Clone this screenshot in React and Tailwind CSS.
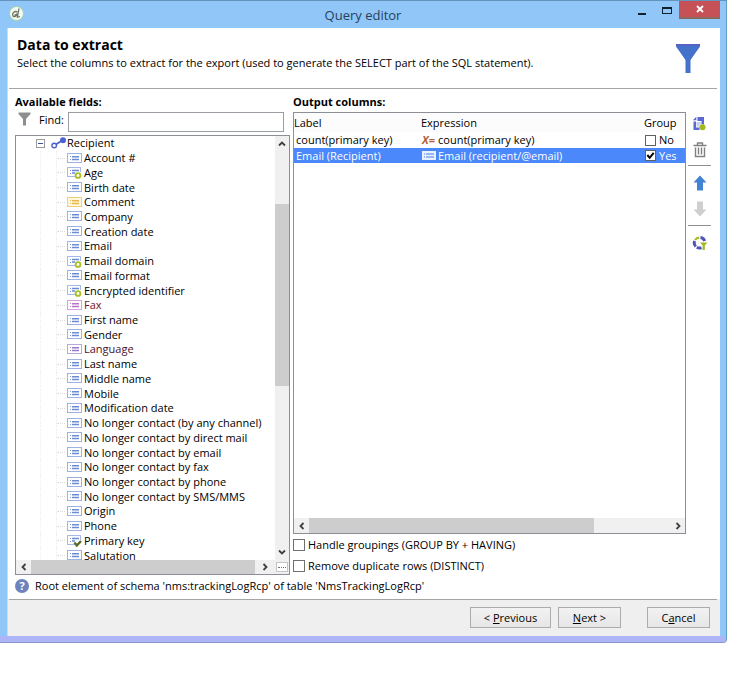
import React from "react";

const fields = [
  ["Account #"],
  ["Age", "calc"],
  ["Birth date"],
  ["Comment", "memo"],
  ["Company"],
  ["Creation date"],
  ["Email"],
  ["Email domain", "calc"],
  ["Email format"],
  ["Encrypted identifier", "calc"],
  ["Fax", "fax"],
  ["First name"],
  ["Gender"],
  ["Language", "language"],
  ["Last name"],
  ["Middle name"],
  ["Mobile"],
  ["Modification date"],
  ["No longer contact (by any channel)"],
  ["No longer contact by direct mail"],
  ["No longer contact by email"],
  ["No longer contact by fax"],
  ["No longer contact by phone"],
  ["No longer contact by SMS/MMS"],
  ["Origin"],
  ["Phone"],
  ["Primary key", "key"],
  ["Salutation"],
];

const strokes = { memo: "#e3b13c", fax: "#b55fc4", language: "#8f6cc4" };
const labelColors = { fax: "text-[#6e1226]", language: "text-[#4a1030]" };

function FieldIcon({ kind }) {
  const color = strokes[kind] || "#5b7fd0";
  const cut = kind === "calc" || kind === "key";
  return (
    <svg width="16" height="13" viewBox="0 0 16 13" className="shrink-0" aria-hidden="true">
      {cut ? (
        <path d="M8 10.5H.5v-9h13V6" fill="none" stroke={color} strokeOpacity="0.55" />
      ) : (
        <rect x="0.5" y="1.5" width="14" height="9" fill={kind === "memo" ? "#fff6dc" : "#fff"} stroke={color} strokeOpacity="0.6" />
      )}
      <path d={cut ? "M3 4.5h1M3 7.5h1" : "M3 4.5h1M3 7.5h1"} stroke={color} strokeOpacity="0.8" fill="none" />
      <path d={cut ? "M5 4.5h7M5 7h3" : "M5 4.8h7M5 7.5h7"} stroke={color} strokeWidth="1.5" strokeOpacity="0.9" fill="none" />
      {kind === "calc" && <circle cx="11" cy="9.5" r="2.4" fill="#fff" stroke="#a9bf22" strokeWidth="1.9" />}
      {kind === "key" && <path d="M7.5 8.5l2.3 3L14 7" fill="none" stroke="#5b6b2e" strokeWidth="2.4" />}
    </svg>
  );
}

function Chevron({ d, label, className }) {
  return (
    <button type="button" aria-label={label} className={"flex shrink-0 items-center justify-center bg-[#f0f0f0] " + className}>
      <svg width="8" height="8" viewBox="0 0 8 8" fill="none" stroke="#404040" strokeWidth="1.8">
        <path d={d} />
      </svg>
    </button>
  );
}

const LEFT = "M5.5 1L2.5 4l3 3";
const RIGHT = "M2.5 1l3 3-3 3";
const UP = "M1 5.5l3-3 3 3";
const DOWN = "M1 2.5l3 3 3-3";

function Header() {
  return (
    <header className="mr-[3px] ml-px flex h-[61px] items-start justify-between border-b border-[#a5a5a5] pr-4 pl-2">
      <div className="pt-[7px]">
        <h1 className="text-[14px] leading-5 font-bold">Data to extract</h1>
        <p className="leading-4">Select the columns to extract for the export (used to generate the SELECT part of the SQL statement).</p>
      </div>
      <svg width="26" height="31" viewBox="0 0 26 31" className="mt-[15px]" aria-hidden="true">
        <path d="M1 1.5h24v2L15.500 17v13h-5V17L1 3.5z" fill="#4472ca" />
        <path d="M1 1.8h24" stroke="#5a5fc0" strokeWidth="1.6" />
      </svg>
    </header>
  );
}

function FieldTree() {
  return (
    <div className="mt-[3px] border border-[#8c8f96]">
      <div className="flex h-[424px]">
        <div className="min-w-0 flex-1 overflow-hidden">
          <ul className="grid h-[427px] auto-rows-fr">
            <li className="flex min-h-0 items-center pl-5">
              <button type="button" aria-label="Collapse Recipient" className="flex size-[9px] items-center justify-center border border-[#9a9a9a]">
                <span className="h-px w-[5px] bg-[#3b4f9a]" />
              </button>
              <svg width="16" height="12" viewBox="0 0 16 12" className="ml-[6px]" aria-hidden="true">
                <path d="M4 8l8-5" stroke="#4a63d0" strokeWidth="1.8" />
                <circle cx="3.2" cy="8.5" r="2.3" fill="#fff" stroke="#4a63d0" strokeWidth="1.4" />
                <circle cx="12" cy="3.3" r="3" fill="#4a63d0" />
              </svg>
              <span>Recipient</span>
            </li>
            {fields.map(([name, kind]) => (
              <li key={name} className="flex min-h-0 items-stretch pl-6">
                <span className="w-4 border-l border-dotted border-[#eeeeee]" />
                <span className="flex w-[11px] items-center border-l border-dotted border-[#ececec]">
                  <span className="w-2 border-t border-dotted border-[#dcdcdc]" />
                </span>
                <span className={"flex items-center whitespace-nowrap " + (labelColors[kind] || "")}>
                  <FieldIcon kind={kind} />
                  <span className="pl-px">{name}</span>
                </span>
              </li>
            ))}
          </ul>
        </div>
        <div className="flex w-[14px] flex-col bg-[#f0f0f0]">
          <Chevron d={UP} label="Scroll up" className="h-4" />
          <div className="mt-[52px] h-[182px] bg-[#cdcdcd]" />
          <Chevron d={DOWN} label="Scroll down" className="mt-auto h-4" />
        </div>
      </div>
      <div className="flex h-[14px] bg-[#f0f0f0]">
        <Chevron d={LEFT} label="Scroll left" className="w-[15px]" />
        <div className="flex-1 bg-[#cdcdcd]" />
        <Chevron d={RIGHT} label="Scroll right" className="w-5" />
        <button type="button" aria-label="More" className="mx-px my-[2px] flex w-3 items-center justify-center border border-[#c4c4c4] bg-white">
          <span className="w-2 border-t border-dotted border-[#707070]" />
        </button>
      </div>
    </div>
  );
}

function ToolButton({ label, children }) {
  return (
    <button type="button" aria-label={label} className="flex h-[26px] items-center justify-center">
      <svg width="16" height="16" viewBox="0 0 16 16">{children}</svg>
    </button>
  );
}

function Toolbar() {
  return (
    <div className="ml-[2px] flex w-[23px] shrink-0 flex-col pt-4">
      <ToolButton label="Add column">
        <path d="M5.500 1H12v7.500H9.500V5H5.500z" fill="#5a68d4" />
        <path d="M.8 4.200L4.300.8v3.400z" fill="#5a68d4" />
        <path d="M1.500 5.500H4v6h3.500V14h-6z" fill="#5a68d4" />
        <path d="M4.500 6h4.500v2.200H7.500v2.300h-3z" fill="#c9cdf0" />
        <circle cx="10.500" cy="11.300" r="3" fill="#a0b824" />
      </ToolButton>
      <ToolButton label="Delete column">
        <path d="M1.500 3.500h13M5.500 3V1h5v2M3.500 5.500v9h9v-9M6.500 5.500v7M9.500 5.500v7" fill="none" stroke="#808080" strokeWidth="1.400" />
      </ToolButton>
      <div className="mt-[2px] mb-px h-px bg-[#909090]" />
      <div className="flex flex-col py-[3px]">
        <ToolButton label="Move up">
          <path d="M8 .5L14.500 7.500H11V15.500H5V7.500H1.500z" fill="#4283d3" />
        </ToolButton>
        <ToolButton label="Move down">
          <path d="M8 15.500L14.500 8.500H11V.5H5V8.500H1.500z" fill="#cfcfcf" />
        </ToolButton>
      </div>
      <div className="h-px bg-[#909090]" />
      <div className="flex flex-col pt-1">
        <ToolButton label="Distribution of values">
          <g fill="none" stroke="#4f56b8" strokeWidth="3">
            <path d="M8.500 2.600a5.200 5.200 0 0 1 4.200 3.400" />
            <path d="M2.600 6a5.200 5.200 0 0 0 1.200 5.500" />
            <path d="M4.800 12.300a5.200 5.200 0 0 0 4.700.4" />
          </g>
          <path d="M3 5a5.200 5.200 0 0 1 4.200-2.400" fill="none" stroke="#a8bd2a" strokeWidth="2.200" />
          <path d="M8 7.500h7.500l-2.700 3v4.500h-2.200v-4.500z" fill="#a0b824" />
        </ToolButton>
      </div>
    </div>
  );
}

function GroupBox({ id, text, checked }) {
  return (
    <span className="flex items-center gap-[3px]">
      <span className="relative flex size-[11px]">
        <input id={id} type="checkbox" defaultChecked={checked} className="peer size-[11px] appearance-none border border-[#606060] bg-white" />
        <svg viewBox="0 0 11 11" className="pointer-events-none absolute inset-0 hidden peer-checked:block" fill="none" stroke="#000" strokeWidth="2">
          <path d="M2.300 5l2.400 2.800 4-5" />
        </svg>
      </span>
      <label htmlFor={id}>{text}</label>
    </span>
  );
}

function OutputColumns() {
  return (
    <div className="flex h-[422px] flex-col border border-[#8c8f96]">
      <table className="w-full table-fixed border-collapse text-left">
        <colgroup>
          <col className="w-[127px]" />
          <col />
          <col className="w-[41px]" />
        </colgroup>
        <thead>
          <tr className="h-[19px] bg-[#fcfcfc]">
            <th className="p-0 font-normal">Label</th>
            <th className="p-0 font-normal">Expression</th>
            <th className="p-0 font-normal">Group</th>
          </tr>
        </thead>
        <tbody>
          <tr className="h-4">
            <td className="p-0 pl-[2px]">count(primary key)</td>
            <td className="p-0">
              <span className="flex items-center">
                <span className="w-[17px] pl-px font-bold text-[#b5623c]"><i>X</i>=</span>
                count(primary key)
              </span>
            </td>
            <td className="p-0 pl-px"><GroupBox id="group-count" text="No" /></td>
          </tr>
          <tr className="h-[15px] bg-[#4a88fb] text-white">
            <td className="p-0 pl-[2px]">Email (Recipient)</td>
            <td className="p-0">
              <span className="flex items-center">
                <svg width="14" height="9" viewBox="0 0 14 9" className="mr-[2px] ml-px" aria-hidden="true">
                  <rect width="14" height="9" fill="#e9f1ff" />
                  <path d="M2 3h1M4 3h8M2 6h1M4 6h8" stroke="#4a7fe6" />
                </svg>
                Email (recipient/@email)
              </span>
            </td>
            <td className="p-0 pl-px"><GroupBox id="group-email" text="Yes" checked /></td>
          </tr>
        </tbody>
      </table>
      <div className="mt-auto flex h-[15px] bg-[#f0f0f0]">
        <Chevron d={LEFT} label="Scroll left" className="w-[15px]" />
        <div className="flex flex-1"><div className="w-[79%] bg-[#cdcdcd]" /></div>
        <Chevron d={RIGHT} label="Scroll right" className="w-[15px]" />
      </div>
    </div>
  );
}

function Option({ id, children }) {
  return (
    <div className="flex h-[21px] items-center gap-[3px]">
      <input id={id} type="checkbox" className="size-3 appearance-none border border-[#707070] bg-white" />
      <label htmlFor={id}>{children}</label>
    </div>
  );
}

function DialogButton({ className, children }) {
  return (
    <button type="button" className={"h-[21px] border border-[#acacac] bg-linear-to-b from-[#f2f2f2] to-[#e6e6e6] leading-[18px] " + className}>
      {children}
    </button>
  );
}

export default function App() {
  return (
    <div className="min-h-screen bg-white pr-[13px] font-['Open_Sans','Noto_Sans',sans-serif] text-[11px] leading-[14px] text-black">
      <div className="rounded-br-[4px] border-t border-r border-b border-t-[#6394bd] border-r-[#5f9fc4] border-b-[#8f93cf] bg-[#90c6f8]">
        <div className="flex h-[27px] items-start">
          <div className="w-[118px] pt-[5px] pl-[9px]">
            <svg width="15" height="15" viewBox="0 0 15 15" aria-hidden="true">
              <circle cx="7.500" cy="7.500" r="7" fill="#f4faf0" stroke="#9fd0a8" />
              <path d="M10 2.500L8.300 11.500M8.500 6c-3-1.500-5.200 1-4.800 3.200s3.600 1.600 4.600-.9M5.500 8.500c.5 1 2 .5 2.500-1M8 11.500l3-1" fill="none" stroke="#6a7568" strokeWidth="1.300" />
            </svg>
          </div>
          <div className="flex-1 pt-[4px] text-center text-[13px] leading-5 text-[#27425c]">Query editor</div>
          <div className="flex w-[118px] justify-end pr-[6px]">
            <button type="button" aria-label="Minimize" className="flex h-[18px] w-[25px] items-end justify-center pb-1"><span className="h-[2px] w-2 bg-[#10202c]" /></button>
            <button type="button" aria-label="Maximize" className="flex h-[18px] w-[25px] items-center justify-center"><span className="h-[7px] w-[10px] border border-t-2 border-[#10202c]" /></button>
            <button type="button" aria-label="Close" className="flex h-[18px] w-[41px] items-center justify-center border-b-2 border-[#8a6a5a] bg-[#c65156]">
              <svg width="8" height="8" viewBox="0 0 8 8" stroke="#fff" strokeWidth="1.800"><path d="M1 1l6 6M7 1L1 7" /></svg>
            </button>
          </div>
        </div>
        <div className="pr-[6px] pl-[7px]">
          <div className="border-l border-[#c8dcee] bg-white">
            <Header />
            <main className="flex pt-[6px] pl-[7px]">
              <section className="w-[275px] shrink-0">
                <h2 className="h-[17px] leading-[14px] font-bold">Available fields:</h2>
                <div className="flex h-5">
                  <svg width="13" height="14" viewBox="0 0 13 14" className="ml-[3px]" aria-hidden="true">
                    <path d="M.5.500h12v1.500L8 7v6.500H5V7L.5 2z" fill="#8e8e8e" />
                  </svg>
                  <label htmlFor="find" className="w-[37px] pt-px pl-2">Find:</label>
                  <input id="find" type="text" className="mr-[6px] min-w-0 flex-1 border border-[#9a9da3] bg-white px-1" />
                </div>
                <FieldTree />
              </section>
              <section className="ml-[3px] min-w-0 flex-1">
                <h2 className="h-[17px] leading-[14px] font-bold">Output columns:</h2>
                <OutputColumns />
                <Option id="handle-groupings">Handle groupings (GROUP BY + HAVING)</Option>
                <Option id="remove-duplicates">Remove duplicate rows (DISTINCT)</Option>
              </section>
              <div className="flex w-[34px] shrink-0"><Toolbar /></div>
            </main>
            <div className="flex h-[23px] items-start pt-[3px] pl-[7px]">
              <span className="flex size-[14px] items-center justify-center rounded-full bg-[#6d83bd] font-bold text-white">?</span>
              <p className="pl-[6px]">Root element of schema 'nms:trackingLogRcp' of table 'NmsTrackingLogRcp'</p>
            </div>
            <footer className="flex h-[37px] bg-[#efefef]">
              <div className="mr-[3px] ml-px flex flex-1 items-start justify-end border-t border-[#a5a5a5] pt-[7px] pr-[7px]">
                <DialogButton className="w-[81px]">&lt; <u>P</u>revious</DialogButton>
                <DialogButton className="ml-[7px] w-[63px]"><u>N</u>ext &gt;</DialogButton>
                <DialogButton className="ml-[26px] w-[63px]">C<u>a</u>ncel</DialogButton>
              </div>
            </footer>
          </div>
        </div>
        <div className="h-[6px] rounded-br-[3px] bg-[#adb4f8]" />
      </div>
    </div>
  );
}
